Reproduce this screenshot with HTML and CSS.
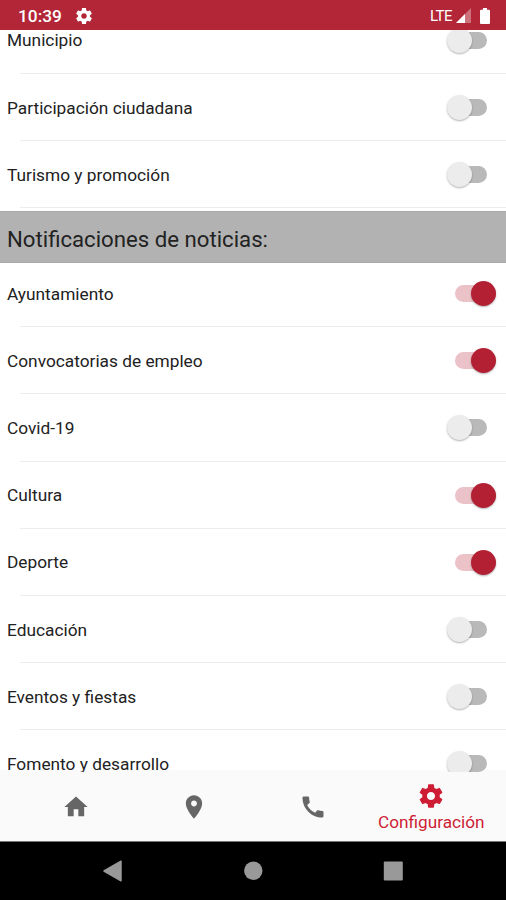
FILE: index.html
```html
<!DOCTYPE html>
<html lang="es">
<head>
    <meta charset="UTF-8">
    <title>Configuración</title>
    <link rel="stylesheet" href="styles.css">
</head>
<body>
    <header class="status-bar">
        <span class="clock">10:39</span>
        <svg class="status-gear" viewBox="2 2 20 20"><path d="M19.43 12.98c.04-.32.07-.64.07-.98s-.03-.66-.07-.98l2.11-1.65c.19-.15.24-.42.12-.64l-2-3.46c-.12-.22-.39-.3-.61-.22l-2.49 1c-.52-.4-1.08-.73-1.69-.98l-.38-2.65C14.46 2.18 14.25 2 14 2h-4c-.25 0-.46.18-.49.42l-.38 2.65c-.61.25-1.17.59-1.69.98l-2.49-1c-.23-.09-.49 0-.61.22l-2 3.46c-.13.22-.07.49.12.64l2.11 1.65c-.04.32-.07.65-.07.98s.03.66.07.98l-2.11 1.65c-.19.15-.24.42-.12.64l2 3.46c.12.22.39.3.61.22l2.49-1c.52.4 1.08.73 1.69.98l.38 2.65c.03.24.24.42.49.42h4c.25 0 .46-.18.49-.42l.38-2.65c.61-.25 1.17-.59 1.69-.98l2.49 1c.23.09.49 0 .61-.22l2-3.46c.12-.22.07-.49-.12-.64l-2.11-1.65zM12 15.5c-1.93 0-3.5-1.57-3.5-3.5s1.57-3.5 3.5-3.5 3.5 1.57 3.5 3.5-1.57 3.5-3.5 3.5z"/></svg>
        <span class="network">LTE</span>
        <svg class="signal" viewBox="0 0 15 15"><path d="M15 0v15H0z" opacity=".35"/><path d="M9 6v9H0z"/></svg>
        <svg class="battery" viewBox="0 0 10 16"><path d="M3 0h4v1.700h2a1 1 0 0 1 1 1V15a1 1 0 0 1-1 1H1a1 1 0 0 1-1-1V2.700a1 1 0 0 1 1-1h2z"/></svg>
    </header>

    <main class="settings">
        <div class="list list-scrolled">
            <div class="row"><span>Municipio</span><i class="switch"></i></div>
            <div class="row"><span>Participación ciudadana</span><i class="switch"></i></div>
            <div class="row"><span>Turismo y promoción</span><i class="switch"></i></div>
        </div>
        <h2 class="section-title"><span>Notificaciones de noticias:</span></h2>
        <div class="list list-news">
            <div class="row"><span>Ayuntamiento</span><i class="switch on"></i></div>
            <div class="row"><span>Convocatorias de empleo</span><i class="switch on"></i></div>
            <div class="row"><span>Covid-19</span><i class="switch"></i></div>
            <div class="row"><span>Cultura</span><i class="switch on"></i></div>
            <div class="row"><span>Deporte</span><i class="switch on"></i></div>
            <div class="row"><span>Educación</span><i class="switch"></i></div>
            <div class="row"><span>Eventos y fiestas</span><i class="switch"></i></div>
            <div class="row"><span>Fomento y desarrollo</span><i class="switch"></i></div>
        </div>
    </main>

    <nav class="tabs">
        <a class="tab"><svg viewBox="0 0 24 24"><path d="M10 20v-6h4v6h5v-8h3L12 3 2 12h3v8z"/></svg></a>
        <a class="tab"><svg viewBox="0 0 24 24"><path d="M12 2C8.130 2 5 5.130 5 9c0 5.250 7 13 7 13s7-7.750 7-13c0-3.870-3.130-7-7-7zm0 9.500c-1.380 0-2.500-1.120-2.500-2.500s1.120-2.500 2.500-2.500 2.500 1.120 2.500 2.500-1.120 2.500-2.500 2.500z"/></svg></a>
        <a class="tab"><svg viewBox="0 0 24 24"><path d="M20.010 15.380c-1.230 0-2.420-.2-3.530-.56-.35-.12-.74-.03-1.010.24l-1.570 1.970c-2.830-1.350-5.480-3.900-6.890-6.830l1.950-1.660c.27-.28.35-.67.24-1.020-.37-1.110-.56-2.300-.56-3.530 0-.54-.45-.99-.99-.99H4.190C3.650 3 3 3.240 3 3.990 3 13.280 10.730 21 20.010 21c.71 0 .99-.63.99-1.180v-3.450c0-.54-.45-.99-.99-.99z"/></svg></a>
        <a class="tab active">
            <svg viewBox="0 0 24 24"><path d="M19.43 12.98c.04-.32.07-.64.07-.98s-.03-.66-.07-.98l2.11-1.65c.19-.15.24-.42.12-.64l-2-3.46c-.12-.22-.39-.3-.61-.22l-2.49 1c-.52-.4-1.08-.73-1.69-.98l-.38-2.65C14.46 2.18 14.25 2 14 2h-4c-.25 0-.46.18-.49.42l-.38 2.65c-.61.25-1.17.59-1.69.98l-2.49-1c-.23-.09-.49 0-.61.22l-2 3.46c-.13.22-.07.49.12.64l2.11 1.65c-.04.32-.07.65-.07.98s.03.66.07.98l-2.11 1.65c-.19.15-.24.42-.12.64l2 3.46c.12.22.39.3.61.22l2.49-1c.52.4 1.08.73 1.69.98l.38 2.65c.03.24.24.42.49.42h4c.25 0 .46-.18.49-.42l.38-2.65c.61-.25 1.17-.59 1.69-.98l2.49 1c.23.09.49 0 .61-.22l2-3.46c.12-.22.07-.49-.12-.64l-2.11-1.65zM12 15.5c-1.93 0-3.5-1.57-3.5-3.5s1.57-3.5 3.5-3.5 3.5 1.57 3.5 3.5-1.57 3.5-3.5 3.500z"/></svg>
            <span>Configuración</span>
        </a>
    </nav>

    <footer class="system-nav">
        <svg viewBox="0 0 20 22"><path d="M18 1.200v19.600L1 11z" stroke-width="1.500" stroke-linejoin="round"/></svg>
        <svg viewBox="0 0 20 22"><circle cx="10.300" cy="10.700" r="9.200"/></svg>
        <svg viewBox="0 0 20 22"><rect x=".8" y="1.500" width="19" height="19" rx="1"/></svg>
    </footer>
</body>
</html>
```

FILE: styles.css
```css
body {
    margin: 0;
    height: 900px;
    display: flex;
    flex-direction: column;
    overflow: hidden;
    background-color: #fff;
    color: #222;
    font-family: Roboto, sans-serif;
}
.status-bar {
    flex: none;
    height: 29.5px;
    box-sizing: border-box;
    padding: 2px 16px 0 18px;
    display: flex;
    align-items: center;
    background-color: #b32637;
    color: #fff;
    fill: #fff;
}
.clock {
    width: 58px;
    font-size: 17.300px;
    font-weight: 500;
}
.status-gear {
    width: 16px;
    height: 16px;
}
.network {
    margin-left: auto;
    font-size: 15px;
    letter-spacing: -0.5px;
}
.signal {
    width: 15px;
    height: 15px;
    margin: 0 9px 0 4px;
}
.battery {
    width: 10px;
    height: 16px;
}
.settings {
    flex: 1;
    min-height: 0;
    overflow: hidden;
    /* last 2px already belong to the tab bar colour */
    background: linear-gradient(#fafafa, #fafafa) 0 100% / 100% 2px no-repeat;
}
.list-scrolled {
    margin-top: -22.700px;
    padding-bottom: 2.400px;
}
.row {
    height: 67.200px;
    box-sizing: border-box;
    padding: 0 10px 0 7px;
    display: flex;
    align-items: center;
    justify-content: space-between;
    background: linear-gradient(#ececec, #ececec) 20px 100% / 100% 1px no-repeat;
    font-size: 17.300px;
}
.list-news .row:first-child {
    height: 64.400px;
    padding-bottom: 2px;
}
.section-title {
    height: 52px;
    box-sizing: border-box;
    margin: 0;
    padding: 4px 7px 0;
    display: flex;
    align-items: center;
    background-color: #b2b2b2;
    border-top: 1px solid #a8a8a8;
    border-bottom: 1px solid #a8a8a8;
    font-size: 22.200px;
    font-weight: 400;
}
.switch {
    width: 32px;
    height: 17px;
    margin-right: 9px;
    display: flex;
    align-items: center;
    border-radius: 9px;
    background-color: #b9b9b9;
}
.switch::before {
    content: "";
    width: 25px;
    height: 25px;
    flex: none;
    margin-left: -8.500px;
    border-radius: 50%;
    background-color: #ececec;
    box-shadow: 0 1px 2px rgba(0,0,0,0.3);
}
.switch.on {
    margin-right: 0;
    justify-content: flex-end;
    background-color: #ecc2c9;
    width: 41px;
}
.switch.on::before {
    background-color: #b32033;
}
.tabs {
    flex: none;
    height: 69px;
    padding: 0 15.500px 0 16.500px;
    display: flex;
    background-color: #fafafa;
    border-bottom: 1px solid #777;
}
.tab {
    flex: 1;
    display: flex;
    flex-direction: column;
    align-items: center;
    justify-content: center;
    fill: #666;
}
.tab svg {
    width: 28px;
    height: 28px;
    flex: none;
}
.tab.active {
    color: #ce1c34;
    fill: #ce1c34;
    font-size: 17.200px;
    line-height: 24px;
    padding-top: 2px;
}
.system-nav {
    flex: none;
    height: 58px;
    padding: 0 43px;
    display: flex;
    justify-content: space-around;
    align-items: center;
    background-color: #000;
    fill: #999;
    stroke: #999;
    stroke-width: 0;
}
.system-nav svg {
    width: 20px;
    height: 22px;
}
```
